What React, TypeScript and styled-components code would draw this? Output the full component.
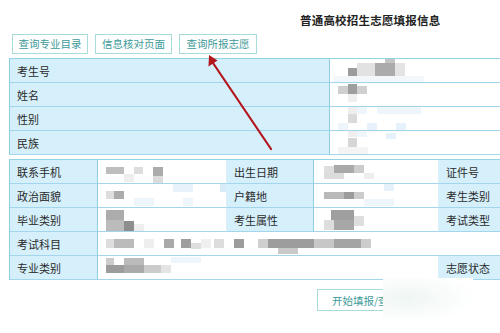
import React from 'react';
import styled, { createGlobalStyle } from 'styled-components';

const GlobalStyle = createGlobalStyle`
  html, body {
    margin: 0;
    padding: 0;
    background: #ffffff;
    overflow: hidden;
  }
  body {
    font-family: "Noto Sans CJK SC", "Noto Sans", sans-serif;
  }
`;

const Page = styled.div`
  position: relative;
  width: 500px;
  height: 333px;
  overflow: hidden;
  background: #ffffff;
`;

const Title = styled.h1`
  margin: 0;
  height: 32px;
  padding: 12px 0 0 300px;
  box-sizing: border-box;
  font-size: 11.5px;
  font-weight: 700;
  line-height: 16px;
  color: #222222;
  letter-spacing: 0.2px;
`;

const Toolbar = styled.div`
  display: flex;
  gap: 7px;
  padding: 2px 0 0 12px;
  height: 26px;
  box-sizing: border-box;
`;

const ToolButton = styled.button<{ $width: number }>`
  width: ${(p) => p.$width}px;
  height: 20px;
  padding: 0;
  background: #ffffff;
  border: 1px solid #a8dcd8;
  color: #3c9a98;
  font-family: inherit;
  font-size: 10.5px;
  line-height: 18px;
`;

const InfoTable = styled.div<{ $columns: string }>`
  display: grid;
  grid-template-columns: ${(p) => p.$columns};
  grid-auto-rows: 24px;
  margin-left: 9px;
  width: 500px;
  border-left: 1px solid #8fcfe6;
  border-top: 1px solid #92d3e4;
`;

const Cell = styled.div<{ $label?: boolean; $span?: number }>`
  position: relative;
  display: flex;
  align-items: center;
  padding-left: 7px;
  box-sizing: border-box;
  grid-column: span ${(p) => p.$span ?? 1};
  background: ${(p) => (p.$label ? '#d5effb' : '#ffffff')};
  border-bottom: 1px solid #a3d6ec;
  border-right: 1px solid ${(p) => (p.$label ? '#8fcbe5' : '#d8eef8')};
  font-size: 11px;
  color: #2a2a2a;
  overflow: hidden;
`;

const Gap = styled.div`
  height: 4px;
`;

const Footer = styled.div`
  display: flex;
  padding: 9px 0 0 317px;
`;

const StartButton = styled.button`
  width: 130px;
  height: 22px;
  padding: 0 0 0 14px;
  text-align: left;
  background: #ffffff;
  border: 1px solid #a8dcd8;
  color: #3c9a98;
  font-family: inherit;
  font-size: 10.5px;
`;

const Smudge = styled.div`
  position: absolute;
  left: 383px;
  top: 278px;
  width: 90px;
  height: 44px;
  background: radial-gradient(ellipse at 25% 45%, #eef6f2 0%, #f8fbfa 40%, #ffffff 75%);
`;

const Arrow = styled.svg`
  position: absolute;
  left: 0;
  top: 0;
  pointer-events: none;
`;

const MosaicSvg = styled.svg`
  position: absolute;
  top: 0;
`;

type Block = [number, number, number, number, string];

function Mosaic({ left, width, height, blocks }: { left: number; width: number; height: number; blocks: Block[] }) {
  return (
    <MosaicSvg style={{ left }} width={width} height={height}>
      {blocks.map(([x, y, w, h, c], i) => (
        <rect key={i} x={x} y={y} width={w} height={h} fill={c} />
      ))}
    </MosaicSvg>
  );
}

const t1Rows: Block[][] = [
  [[14, 9, 9, 8, '#9c9c9c'], [23, 4, 18, 13, '#e2e2e2'], [41, 4, 20, 13, '#ababab'], [51, 0, 10, 4, '#c4c4c4'], [61, 4, 10, 13, '#e4e4e4'], [0, 17, 90, 7, '#f2f7fb']],
  [[4, 3, 10, 8, '#cfcfcf'], [14, 1, 9, 10, '#9e9e9e'], [23, 3, 10, 8, '#cfcfcf'], [14, 11, 9, 8, '#efefef']],
  [[14, 0, 9, 7, '#eeeeee'], [23, 0, 10, 7, '#eef5fb'], [43, 0, 44, 7, '#eef5fb'], [14, 7, 9, 9, '#dadada'], [4, 16, 10, 8, '#eef5fb'], [33, 16, 10, 8, '#e6f1fb'], [62, 16, 10, 8, '#e6f1fb']],
  [[14, 0, 9, 6, '#eeeeee'], [23, 0, 10, 6, '#eef5fb'], [52, 2, 10, 6, '#e6f1fb'], [14, 7, 9, 9, '#d6d6d6'], [4, 16, 30, 8, '#f4f4f4']],
];

const t2Value1: Block[][] = [
  [[8, 7, 18, 7, '#bdbdbd'], [36, 7, 9, 7, '#dddddd'], [55, 7, 10, 9, '#ababab'], [26, 14, 10, 8, '#eeeeee'], [55, 16, 10, 7, '#dcdcdc']],
  [[8, 7, 8, 8, '#dedede'], [16, 7, 10, 8, '#acacac'], [75, 0, 20, 8, '#e8f2fb'], [122, 0, 7, 8, '#d8ecf8'], [36, 14, 20, 8, '#eef5fb'], [85, 14, 10, 8, '#eef5fb']],
  [[8, 2, 18, 10, '#acacac'], [8, 12, 18, 11, '#bbbbbb'], [26, 13, 10, 10, '#8e8e8e'], [36, 16, 10, 7, '#eeeeee']],
];

const t2Value2: Block[][] = [
  [[10, 6, 10, 7, '#dedede'], [20, 5, 20, 8, '#a9a9a9'], [40, 5, 10, 8, '#cccccc'], [10, 13, 20, 6, '#dcdcdc'], [50, 13, 10, 6, '#eeeeee']],
  [[10, 8, 20, 7, '#b9b9b9'], [30, 8, 10, 7, '#9c9c9c'], [40, 8, 10, 7, '#cccccc'], [70, 0, 10, 7, '#e6f1fb'], [50, 15, 30, 7, '#eef5fb']],
  [[17, 2, 23, 10, '#9f9f9f'], [10, 12, 10, 10, '#dddddd'], [20, 12, 20, 10, '#a7a7a7'], [40, 8, 10, 10, '#dedede']],
];

const examBlocks: Block[] = [
  [8, 7, 8, 9, '#dddddd'], [16, 7, 20, 9, '#bbbbbb'], [46, 7, 10, 9, '#eeeeee'], [66, 7, 10, 9, '#a9a9a9'], [83, 7, 10, 9, '#9e9e9e'],
  [93, 11, 10, 6, '#dedede'], [103, 7, 10, 9, '#f0f0f0'], [116, 7, 10, 9, '#dddddd'], [136, 7, 10, 9, '#9c9c9c'],
  [160, 7, 20, 9, '#cfcfcf'], [170, 7, 46, 9, '#9d9d9d'], [180, 16, 20, 6, '#c9c9c9'], [216, 7, 20, 9, '#c7c7c7'], [236, 7, 27, 9, '#a4a4a4'], [263, 7, 10, 9, '#cccccc'],
];

const majorBlocks: Block[] = [
  [8, 2, 8, 7, '#cccccc'], [26, 2, 20, 7, '#bbbbbb'], [8, 9, 18, 8, '#9c9c9c'], [26, 9, 20, 8, '#aaaaaa'], [46, 9, 17, 8, '#cccccc'], [63, 9, 10, 8, '#e4e4e4'], [73, 1, 30, 6, '#eef5fb'],
];

export default function App() {
  return (
    <Page>
      <GlobalStyle />
      <Title>普通高校招生志愿填报信息</Title>
      <Toolbar>
        <ToolButton $width={76}>查询专业目录</ToolButton>
        <ToolButton $width={77}>信息核对页面</ToolButton>
        <ToolButton $width={78}>查询所报志愿</ToolButton>
      </Toolbar>

      <InfoTable $columns="320px 1fr">
        {['考生号', '姓名', '性别', '民族'].map((label, i) => (
          <React.Fragment key={label}>
            <Cell $label>{label}</Cell>
            <Cell>
              <Mosaic left={4} width={91} height={24} blocks={t1Rows[i]} />
            </Cell>
          </React.Fragment>
        ))}
      </InfoTable>

      <Gap />

      <InfoTable $columns="88px 129px 87px 125px 1fr">
        {[
          ['联系手机', '出生日期', '证件号'],
          ['政治面貌', '户籍地', '考生类别'],
          ['毕业类别', '考生属性', '考试类型'],
        ].map(([a, b, c], i) => (
          <React.Fragment key={a}>
            <Cell $label>{a}</Cell>
            <Cell>
              <Mosaic left={0} width={129} height={24} blocks={t2Value1[i]} />
            </Cell>
            <Cell $label>{b}</Cell>
            <Cell>
              <Mosaic left={0} width={125} height={24} blocks={t2Value2[i]} />
            </Cell>
            <Cell $label>{c}</Cell>
          </React.Fragment>
        ))}
        <Cell $label>考试科目</Cell>
        <Cell $span={4}>
          <Mosaic left={0} width={300} height={24} blocks={examBlocks} />
        </Cell>
        <Cell $label>专业类别</Cell>
        <Cell $span={3}>
          <Mosaic left={0} width={120} height={24} blocks={majorBlocks} />
        </Cell>
        <Cell $label>志愿状态</Cell>
      </InfoTable>

      <Footer>
        <StartButton>开始填报/查看志愿</StartButton>
      </Footer>
      <Smudge />

      <Arrow width={500} height={333}>
        <line x1={271} y1={149} x2={213} y2={63} stroke="#b3161c" strokeWidth={2.2} strokeLinecap="round" />
        <polygon points="209,55 208.5,66.5 217.5,60.5" fill="#b3161c" />
      </Arrow>
    </Page>
  );
}
